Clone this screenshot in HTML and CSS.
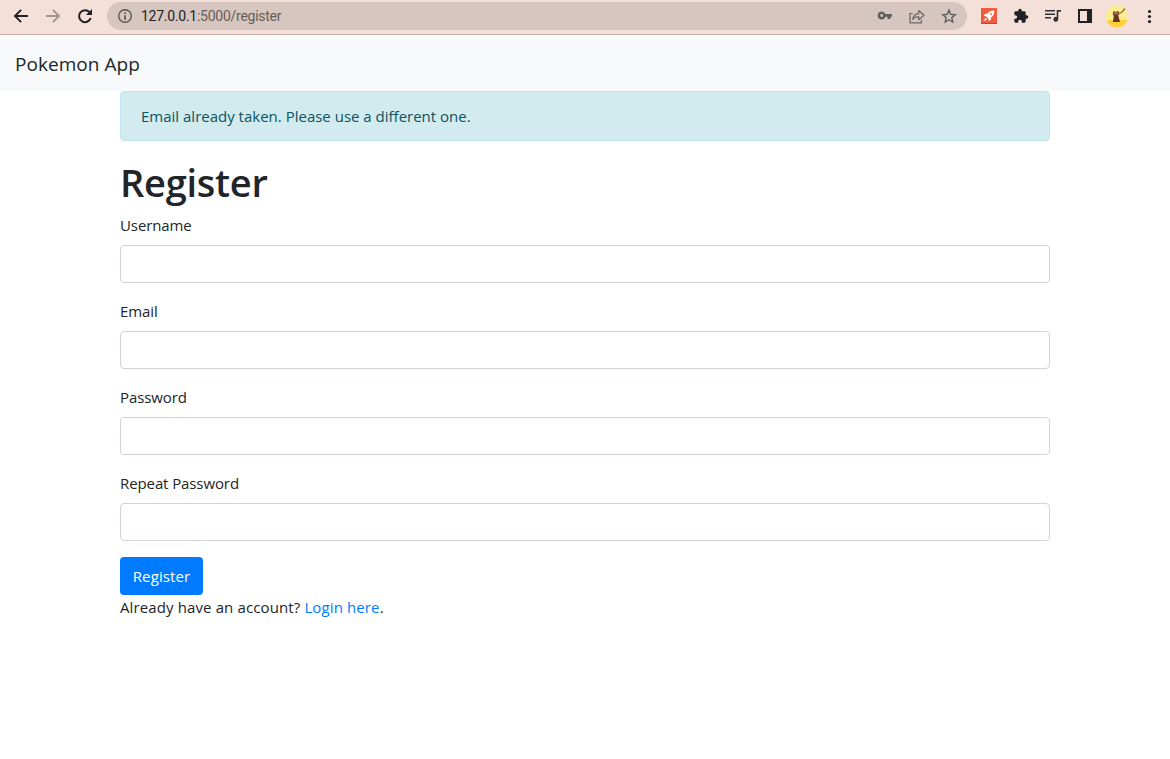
FILE: index.html
```html
<!DOCTYPE html>
<html lang="en">
<head>
<meta charset="utf-8">
<title>Register - Pokemon App</title>
<link rel="stylesheet" href="styles.css">
</head>
<body>
<header class="toolbar">
  <div class="nav-icons">
    <svg class="icon" viewBox="0 0 24 24" fill="#202124"><path d="M22.500 10.500H6.500l6.700-6.700L11.200 1.800 1 12l10.200 10.200 2-2-6.700-6.700h16z"/></svg>
    <svg class="icon" viewBox="0 0 24 24" fill="#a2938f"><path d="M1.500 10.500h16l-6.700-6.700 2-2L23 12 12.800 22.200l-2-2 6.700-6.700h-16z"/></svg>
    <svg class="icon" viewBox="0 0 16 16" fill="none" stroke="#202124" stroke-width="2"><path d="M13.700 10.200A6 6 0 1 1 12.500 4.100L14 5.600"/><path d="M15 1v6H9z" fill="#202124" stroke="none"/></svg>
  </div>
  <div class="omnibox">
    <svg class="icon info" viewBox="0 0 16 16"><circle cx="8" cy="8" r="6.300" fill="none" stroke="#5b5655" stroke-width="1.400"/><path d="M7.200 4.400h1.600V6H7.200zM7.200 7.200h1.600v4.500H7.200z" fill="#4f4c4b"/></svg>
    <span class="url"><span class="host">127.0.0.1</span>:5000/register</span>
    <div class="page-actions">
      <svg class="icon" viewBox="0 0 16 16" fill="#5f6060"><path fill-rule="evenodd" d="M4.700 3.500a4 4 0 1 0 3.800 5.200h2v2.300h3V8.700H15V6.100H8.400A4 4 0 0 0 4.700 3.500zm0 2.600a1.400 1.400 0 1 1 0 2.800 1.400 1.400 0 0 1 0-2.800z"/></svg>
      <svg class="icon" viewBox="0 0 16 16" fill="none" stroke="#6a6766" stroke-width="1.200"><path d="M3.500 5.500H1v9.300h11.400v-3"/><path d="M3.700 11.500C4.200 8 6.200 6 9.700 5.700V2.500L15 7.300l-5.300 4.500V8.700C7 8.800 5.200 9.600 3.700 11.500z" stroke-linejoin="round"/></svg>
      <svg class="icon" viewBox="0 0 16 16" fill="none" stroke="#5f6060" stroke-width="1.400"><path d="M8 2.200l1.700 4.100 4.500.400-3.400 2.900 1 4.400L8 11.700 4.200 14l1-4.400-3.400-2.900 4.500-.400z"/></svg>
    </div>
  </div>
  <div class="extensions">
    <svg class="icon" viewBox="0 0 16 16"><path fill="#f15b40" d="M0 0h16v16H0z"/><path fill="#cf412c" d="M0 15h16v1H0z"/><path fill="#fff" fill-rule="evenodd" d="M13.300 2.400c-3-.200-5 .800-6.700 3L4.200 5.800 2.700 8l2.100.200 2.700 2.800.200 2.200 2.200-1.600.400-2.400c2.200-1.700 3.200-3.800 3-6.800zM10 5a.9.9 0 1 1 0 1.800A.9.9 0 0 1 10 5zM4.400 9.800l-1.900 3.500 3.700-1.700z"/></svg>
    <svg class="icon" viewBox="0 0 24 24" fill="#202124"><path d="M20.500 11H19V7c0-1.100-.900-2-2-2h-4V3.500a2.500 2.500 0 0 0-5 0V5H4c-1.100 0-2 .900-2 2v3.800h1.500a2.700 2.700 0 0 1 0 5.400H2V20c0 1.100.900 2 2 2h3.800v-1.500a2.700 2.700 0 0 1 5.400 0V22H17c1.100 0 2-.900 2-2v-4h1.500a2.500 2.500 0 0 0 0-5z"/></svg>
    <svg class="icon" viewBox="0 0 16 16" fill="#303134"><path d="M0 2h10v1.500H0zM0 5.500h10V7H0zM0 9h6v1.500H0zM11.700 2H16v1.700h-2.700v7.600a2.400 2.400 0 1 1-1.600-2.200z"/></svg>
    <svg class="icon" viewBox="0 0 16 16"><path fill="#202124" fill-rule="evenodd" d="M1 1h14v14H1zm2 2v10h7V3z"/></svg>
    <svg class="avatar" viewBox="0 0 22 22"><circle cx="11" cy="11" r="11" fill="#faed91"/><path d="M0.600 15h20.800a11 11 0 0 1-20.800 0z" fill="#fdd13a"/><path d="M6.800 17l1-5.500-1-3 1-2.500 2 1 2.500-1 1 2-1 2.500 1.700 6.500z" fill="#68351f"/><path d="M12.500 9l3.500-2 3-3.500" fill="none" stroke="#9b683b" stroke-width="1.300"/><path d="M8 7.300h4v2H8z" fill="#a77954"/></svg>
    <svg class="icon" viewBox="0 0 16 16" fill="#202124"><circle cx="8.500" cy="3.500" r="1.600"/><circle cx="8.500" cy="8.500" r="1.600"/><circle cx="8.500" cy="13.500" r="1.600"/></svg>
  </div>
</header>
<nav class="navbar"><a class="brand">Pokemon App</a></nav>
<main class="container">
  <div class="alert">Email already taken. Please use a different one.</div>
  <h1 class="title">Register</h1>
  <form class="form">
    <div class="form-group"><label class="label" for="username">Username</label><input class="control" id="username" type="text"></div>
    <div class="form-group"><label class="label" for="email">Email</label><input class="control" id="email" type="text"></div>
    <div class="form-group"><label class="label" for="password">Password</label><input class="control" id="password" type="password"></div>
    <div class="form-group"><label class="label" for="password2">Repeat Password</label><input class="control" id="password2" type="password"></div>
    <button class="btn" type="button">Register</button>
  </form>
  <p class="login">Already have an account? <a class="link">Login here</a>.</p>
</main>
</body>
</html>
```
FILE: styles.css
```css
* { box-sizing: border-box; }
body {
  margin: 0;
  background: #fff;
  color: #212529;
  font: 400 15px/24px "Open Sans", "Noto Sans", sans-serif;
}
.toolbar {
  display: flex;
  align-items: center;
  height: 35px;
  padding: 0 13px;
  padding-bottom: 3px;
  background: #f5e0d9;
  border-bottom: 1px solid #c5b2ae;
}
.icon { display: block; width: 16px; height: 16px; flex: none; }
.nav-icons { display: flex; gap: 16px; width: 94px; }
.omnibox {
  display: flex;
  align-items: center;
  width: 860px;
  height: 28px;
  padding: 0 10px;
  border-radius: 14px;
  background: #d7c6bf;
}
.url {
  margin-left: 8px;
  color: #655e5b;
  font: 400 14px/20px Roboto, sans-serif;
  letter-spacing: -0.26px;
}
.host { color: #202124; }
.page-actions { display: flex; gap: 16px; margin-left: auto; }
.extensions {
  display: flex;
  align-items: center;
  gap: 16px;
  margin-left: 14px;
}
.avatar { width: 22px; height: 22px; margin: 0 -3px; flex: none; }
.navbar {
  display: flex;
  align-items: center;
  height: 56px;
  padding: 2px 15px 0;
  background: #f8f9fb;
}
.brand { font-size: 19px; line-height: 30px; letter-spacing: 0.04px; }
.container { width: 930px; margin: 0 auto; }
.alert {
  height: 50px;
  margin-bottom: 16px;
  padding: 12px 20px;
  border: 1px solid #bee5eb;
  border-radius: 4px;
  background: #d1ebef;
  color: #0c5460;
}
.title {
  margin: 0 0 8px;
  height: 48px;
  font-size: 38px;
  line-height: 50px;
  font-weight: 600;
  letter-spacing: -0.25px;
}
.form-group { margin-bottom: 16px; }
.label { display: block; margin-bottom: 8px; letter-spacing: -0.1px; }
.control {
  display: block;
  width: 100%;
  height: 38px;
  border: 1px solid #ced4da;
  border-radius: 4px;
  background: #fff;
}
.btn {
  display: block;
  width: 83px;
  height: 38px;
  padding: 0;
  border: 0;
  border-radius: 4px;
  background: #007bff;
  color: #fff;
  font: inherit;
  letter-spacing: 0.1px;
}
.login { margin: 0; letter-spacing: 0.12px; }
.link { color: #007bff; }
```
